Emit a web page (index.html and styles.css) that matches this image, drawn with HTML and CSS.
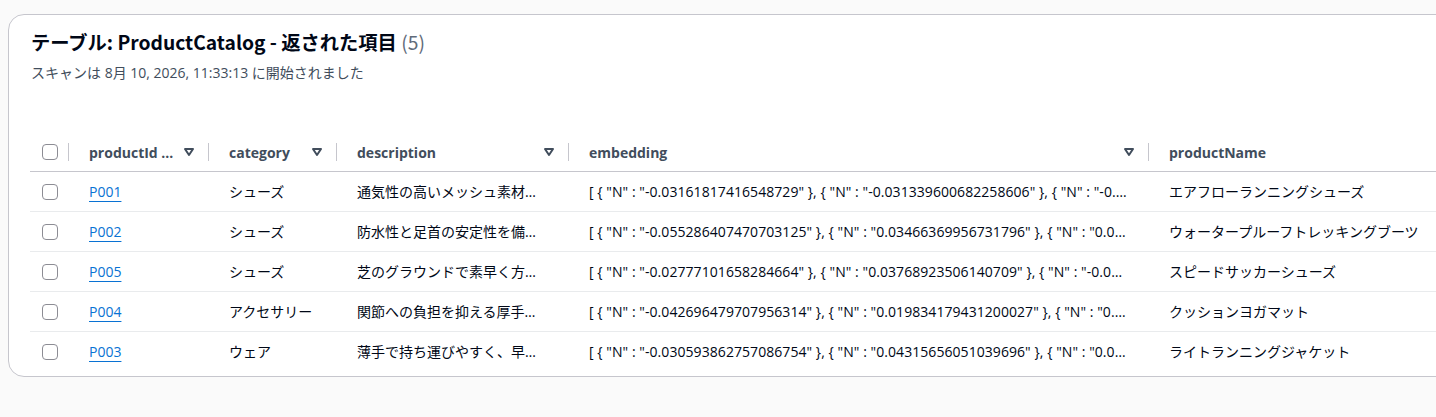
FILE: index.html
```html
<!DOCTYPE html>
<html lang="ja">
<head>
<meta charset="utf-8">
<link rel="stylesheet" href="styles.css">
</head>
<body>
<div class="card">
  <div class="head">
    <h1 class="title">テーブル: ProductCatalog - 返された項目 <span class="count">(5)</span></h1>
    <div class="desc">スキャンは 8月 10, 2026, 11:33:13 に開始されました</div>
  </div>
  <table class="grid">
    <colgroup>
      <col class="c-check"><col class="c-id"><col class="c-cat"><col class="c-desc"><col class="c-emb"><col class="c-name">
    </colgroup>
    <thead>
      <tr>
        <th class="chk"><span class="box"></span></th>
        <th><div class="th"><span class="lbl">productId …</span><svg class="sort" viewBox="0 0 12 10"><path d="M2 2 L10 2 L6 8 Z"/></svg></div></th>
        <th><div class="th"><span class="lbl">category</span><svg class="sort" viewBox="0 0 12 10"><path d="M2 2 L10 2 L6 8 Z"/></svg></div></th>
        <th><div class="th"><span class="lbl">description</span><svg class="sort" viewBox="0 0 12 10"><path d="M2 2 L10 2 L6 8 Z"/></svg></div></th>
        <th><div class="th"><span class="lbl">embedding</span><svg class="sort" viewBox="0 0 12 10"><path d="M2 2 L10 2 L6 8 Z"/></svg></div></th>
        <th class="last"><div class="th"><span class="lbl">productName</span></div></th>
      </tr>
    </thead>
    <tbody>
      <tr>
        <td class="chk"><span class="box"></span></td>
        <td><a href="#">P001</a></td>
        <td>シューズ</td>
        <td>通気性の高いメッシュ素材を使用した軽量ランニングシューズ</td>
        <td class="emb">[ { "N" : "-0.03161817416548729" }, { "N" : "-0.031339600682258606" }, { "N" : "-0.0123456789" } ]</td>
        <td>エアフローランニングシューズ</td>
      </tr>
      <tr>
        <td class="chk"><span class="box"></span></td>
        <td><a href="#">P002</a></td>
        <td>シューズ</td>
        <td>防水性と足首の安定性を備えたトレッキングブーツ</td>
        <td class="emb">[ { "N" : "-0.055286407470703125" }, { "N" : "0.03466369956731796" }, { "N" : "0.0123456789" } ]</td>
        <td>ウォータープルーフトレッキングブーツ</td>
      </tr>
      <tr>
        <td class="chk"><span class="box"></span></td>
        <td><a href="#">P005</a></td>
        <td>シューズ</td>
        <td>芝のグラウンドで素早く方向転換できるサッカーシューズ</td>
        <td class="emb">[ { "N" : "-0.02777101658284664" }, { "N" : "0.03768923506140709" }, { "N" : "-0.0123456789" } ]</td>
        <td>スピードサッカーシューズ</td>
      </tr>
      <tr>
        <td class="chk"><span class="box"></span></td>
        <td><a href="#">P004</a></td>
        <td>アクセサリー</td>
        <td>関節への負担を抑える厚手のヨガマット</td>
        <td class="emb">[ { "N" : "-0.042696479707956314" }, { "N" : "0.019834179431200027" }, { "N" : "0.0123456789" } ]</td>
        <td>クッションヨガマット</td>
      </tr>
      <tr>
        <td class="chk"><span class="box"></span></td>
        <td><a href="#">P003</a></td>
        <td>ウェア</td>
        <td>薄手で持ち運びやすく、早く乾くランニングジャケット</td>
        <td class="emb">[ { "N" : "-0.030593862757086754" }, { "N" : "0.04315656051039696" }, { "N" : "0.0123456789" } ]</td>
        <td>ライトランニングジャケット</td>
      </tr>
    </tbody>
  </table>
</div>
</body>
</html>
```

FILE: styles.css
```css
html, body {
  margin: 0;
  padding: 0;
  background: #fafafa;
  overflow: hidden;
}
body {
  font-family: "Open Sans", "Noto Sans CJK JP", sans-serif;
  color: #000716;
  padding: 14px 0 0 8px;
  height: 417px;
  box-sizing: border-box;
}
.card {
  width: 1500px;
  background: #ffffff;
  border: 1px solid #c6c6cd;
  border-radius: 16px;
  box-sizing: border-box;
  padding: 0 0 5px 21px;
}
.head {
  padding: 15px 0 0 1px;
  height: 118px;
  box-sizing: border-box;
}
.title {
  margin: 0;
  font-family: "Noto Sans CJK JP", "Open Sans", sans-serif;
  font-size: 19.25px;
  line-height: 24px;
  font-weight: 700;
  color: #000716;
}
.count {
  font-weight: 400;
  color: #5f6b7a;
}
.desc {
  margin-top: 9px;
  font-size: 14px;
  line-height: 20px;
  color: #414d5c;
}
.grid {
  border-collapse: collapse;
  table-layout: fixed;
  width: 1470px;
}
.c-check { width: 39px; }
.c-id { width: 140px; }
.c-cat { width: 128px; }
.c-desc { width: 232px; }
.c-emb { width: 580px; }
.c-name { width: 351px; }
th {
  height: 38px;
  padding: 0;
  text-align: left;
  font-size: 14px;
  font-weight: 700;
  color: #414d5c;
  border-bottom: 1px solid #c6c6cd;
  vertical-align: middle;
}
.th {
  position: relative;
  display: flex;
  align-items: center;
  padding: 0 14px 0 20px;
  height: 38px;
}
.th::after {
  content: "";
  position: absolute;
  right: 0;
  top: 10px;
  height: 18px;
  width: 1px;
  background: #c6c6cd;
}
th.last .th::after { display: none; }
th.chk { position: relative; padding-left: 12px; }
th.chk::after {
  content: "";
  position: absolute;
  right: 0;
  top: 10px;
  height: 18px;
  width: 1px;
  background: #c6c6cd;
}
.lbl {
  flex: 1;
  white-space: nowrap;
  overflow: hidden;
}
.sort {
  width: 12px;
  height: 10px;
  flex: none;
}
.sort path {
  fill: none;
  stroke: #414d5c;
  stroke-width: 2;
  stroke-linejoin: round;
}
td {
  height: 39px;
  padding: 0 20px;
  font-size: 14px;
  line-height: 20px;
  white-space: nowrap;
  overflow: hidden;
  text-overflow: ellipsis;
  border-bottom: 1px solid #e9ebed;
  color: #000716;
}
td.emb { letter-spacing: 0.06px; }
tbody tr:last-child td { border-bottom: none; }
td.chk { padding: 0 0 0 12px; }
.box {
  display: block;
  width: 16px;
  height: 16px;
  border: 1.5px solid #8c8c94;
  border-radius: 4px;
  box-sizing: border-box;
  background: #fff;
}
a {
  color: #0972d3;
  text-decoration: underline;
  text-underline-offset: 4px;
  text-decoration-thickness: 1px;
}
```
